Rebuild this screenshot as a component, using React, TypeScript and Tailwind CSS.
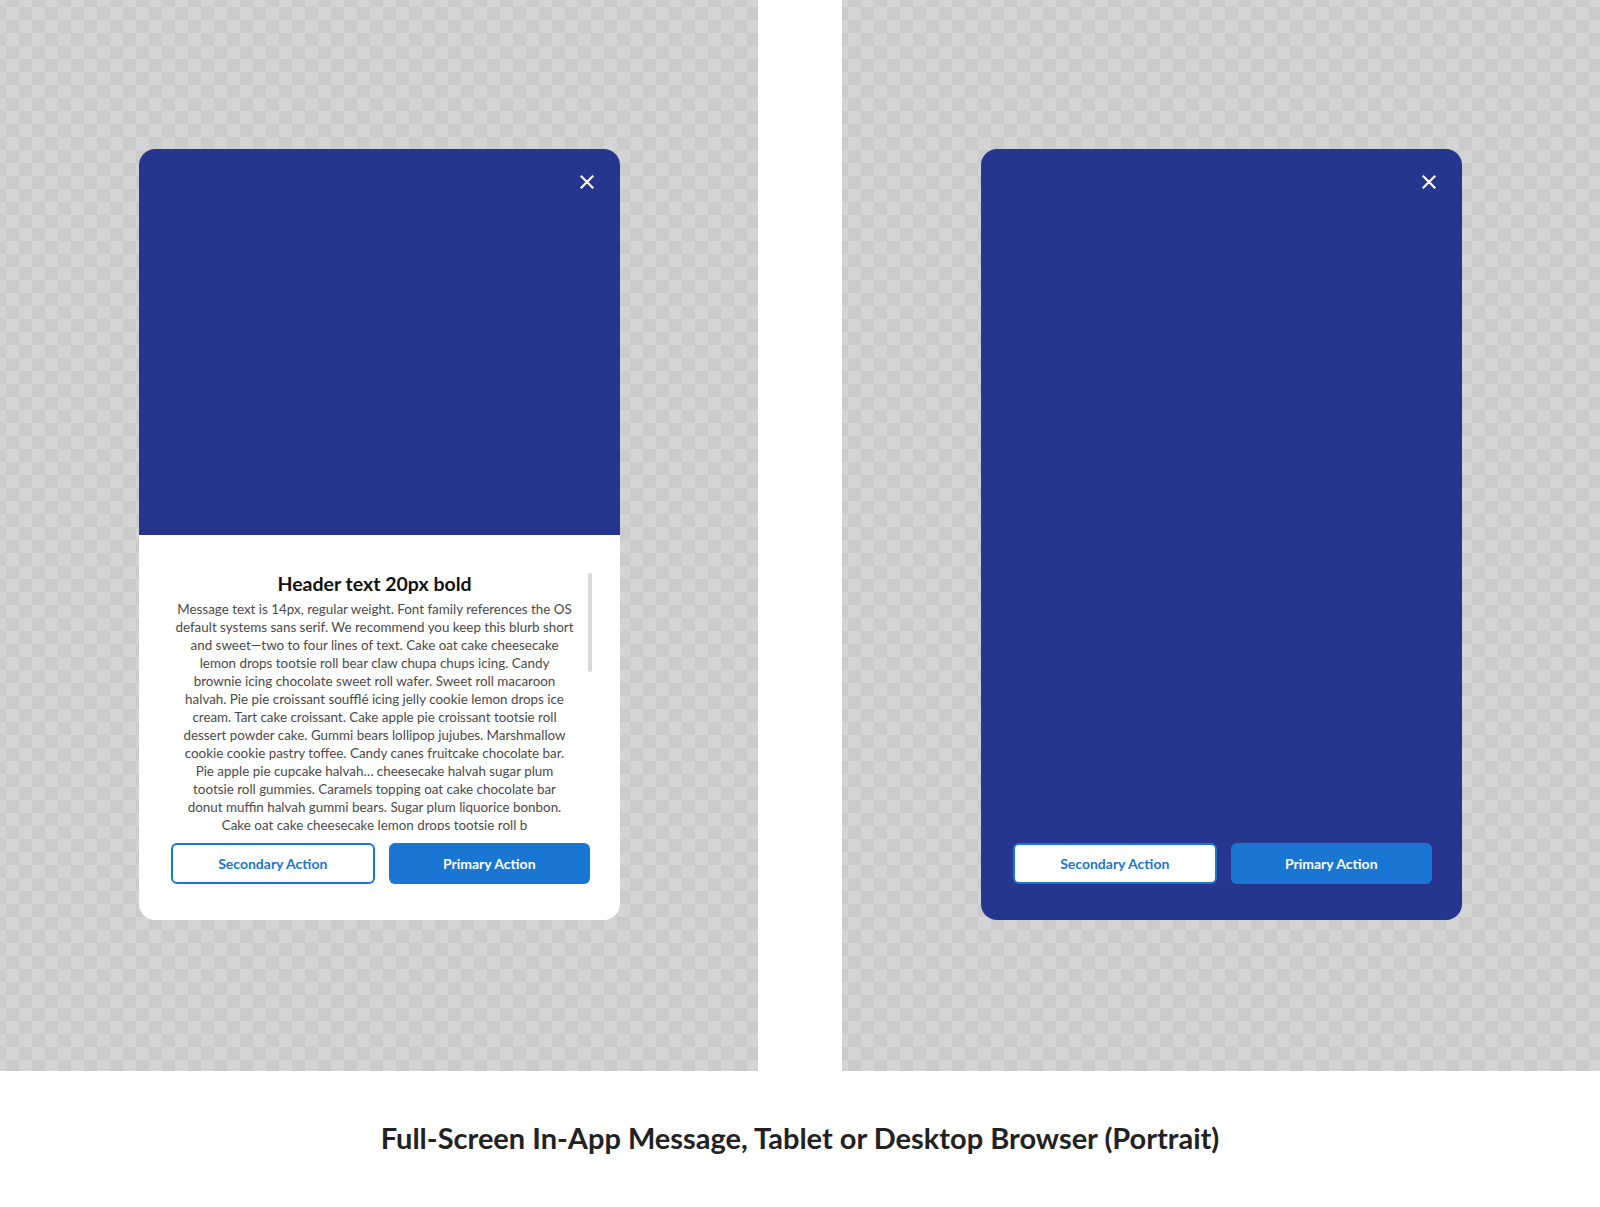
import React from "react";

const lines = [
  "Message text is 14px, regular weight. Font family references the OS",
  "default systems sans serif. We recommend you keep this blurb short",
  "and sweet\u2014two to four lines of text. Cake oat cake cheesecake",
  "lemon drops tootsie roll bear claw chupa chups icing. Candy",
  "brownie icing chocolate sweet roll wafer. Sweet roll macaroon",
  "halvah. Pie pie croissant souffl\u00e9 icing jelly cookie lemon drops ice",
  "cream. Tart cake croissant. Cake apple pie croissant tootsie roll",
  "dessert powder cake. Gummi bears lollipop jujubes. Marshmallow",
  "cookie cookie pastry toffee. Candy canes fruitcake chocolate bar.",
  "Pie apple pie cupcake halvah\u2026 cheesecake halvah sugar plum",
  "tootsie roll gummies. Caramels topping oat cake chocolate bar",
  "donut muffin halvah gummi bears. Sugar plum liquorice bonbon.",
  "Cake oat cake cheesecake lemon drops tootsie roll b",
];

function CloseIcon() {
  return (
    <svg width="14" height="14" viewBox="0 0 14 14" fill="none">
      <path d="M1.5 1.5L12.5 12.5M12.5 1.5L1.5 12.5" stroke="white" strokeWidth="2.2" strokeLinecap="square" />
    </svg>
  );
}

function Actions() {
  return (
    <div className="flex gap-[14px] pl-[32px] pr-[30px]">
      <button className="h-[41px] flex-1 rounded-[6px] border-2 border-[#1976d2] bg-white text-[14px] font-bold text-[#1976d2]">
        Secondary Action
      </button>
      <button className="h-[41px] flex-1 rounded-[6px] bg-[#1976d2] text-[14px] font-bold text-white">
        Primary Action
      </button>
    </div>
  );
}

function Checker({ children }: { children: React.ReactNode }) {
  return (
    <div className="flex w-[758px] justify-center bg-[#d3d3d3] bg-[image:repeating-conic-gradient(#cbcbcb_0%_25%,#d4d4d4_0%_50%)] bg-[length:26px_26px] bg-[position:6px_7px] pt-[149px]">
      {children}
    </div>
  );
}

export default function App() {
  return (
    <div className="flex h-[1207px] w-[1600px] flex-col bg-white font-['Lato',sans-serif]">
      {/* panels */}
      <div className="flex h-[1071px]">
        {/* Left: image + text */}
        <Checker>
          <div className="flex h-[771px] w-[481px] flex-col overflow-hidden rounded-[16px] bg-white">
            <div className="flex h-[386px] justify-end bg-[#26358e] pr-[26px] pt-[26px]">
              <button className="h-[14px] w-[14px]">
                <CloseIcon />
              </button>
            </div>
            <div className="flex flex-1 flex-col pt-[37px]">
              <div className="flex h-[258px] pl-[34px] pr-[28px]">
                <div className="w-[404px] overflow-hidden text-center">
                  <h1 className="h-[24px] text-[19.5px] font-bold leading-[24px] text-[#111]">Header text 20px bold</h1>
                  <p className="mt-[4px] text-[13.4px] leading-[18px] text-[#4a4a4a]">
                    {lines.map((l, i) => (
                      <span key={i} className="block whitespace-nowrap">
                        {l}
                      </span>
                    ))}
                  </p>
                </div>
                <div className="ml-auto mt-[1px] h-[99px] w-[4px] rounded-full bg-[#d9d9d9]" />
              </div>
              <div className="mt-[13px]">
                <Actions />
              </div>
            </div>
          </div>
        </Checker>
        {/* gap */}
        <div className="w-[84px] bg-white" />
        {/* Right: image only */}
        <Checker>
          <div className="flex h-[771px] w-[481px] flex-col rounded-[16px] bg-[#26358e] pb-[36px]">
            <div className="flex justify-end pr-[26px] pt-[26px]">
              <button className="h-[14px] w-[14px]">
                <CloseIcon />
              </button>
            </div>
            <div className="mt-auto">
              <Actions />
            </div>
          </div>
        </Checker>
      </div>
      {/* caption */}
      <div className="flex flex-1 items-center justify-center pb-[2px]">
        <h2 className="text-[29px] font-bold text-[#222]">
          Full-Screen In-App Message, Tablet or Desktop Browser (Portrait)
        </h2>
      </div>
    </div>
  );
}
